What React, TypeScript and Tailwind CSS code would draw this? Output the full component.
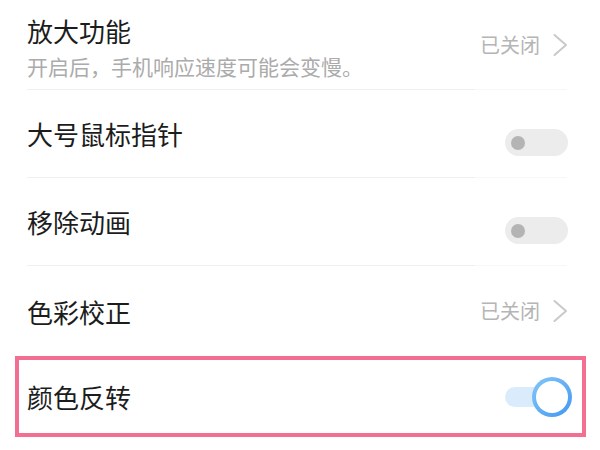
import React from 'react';

const font = { fontFamily: '"Noto Sans CJK SC", "Noto Sans", sans-serif' };

function Chevron() {
  return (
    <svg width="16" height="24" viewBox="0 0 16 24" fill="none">
      <path d="M2.5 2 L14 12 L2.5 22" stroke="#c9c9c9" strokeWidth="2" strokeLinecap="round" strokeLinejoin="round" />
    </svg>
  );
}

function StatusOff() {
  return (
    <div className="flex items-center gap-[12px] pr-[32px]">
      <span className="text-[20px] leading-[26px] text-[#b5b5b5]">已关闭</span>
      <Chevron />
    </div>
  );
}

function SwitchOff() {
  return (
    <div className="mr-[32px] mt-[18px] flex h-[27px] w-[63px] items-center rounded-full bg-[#ececec] pl-[6px]">
      <div className="h-[14px] w-[14px] rounded-full bg-[#b4b4b4]" />
    </div>
  );
}

function SwitchOn() {
  return (
    <div className="relative mr-[10px] h-[40px] w-[67px]">
      <div className="absolute left-0 top-[10px] h-[20px] w-[56px] rounded-full bg-[#daecfc]" />
      <div className="absolute right-0 top-0 h-[40px] w-[40px] rounded-full bg-gradient-to-br from-[#86c6fa] to-[#3f98f0] p-[4px]">
        <div className="h-full w-full rounded-full bg-white" />
      </div>
    </div>
  );
}

function Divider() {
  return (
    <div className="flex h-[1px] pl-[27px]">
      <div className="h-full w-[448px] bg-[#efefef]" />
      <div className="h-full w-[92px] bg-[#f7f7f7]" />
    </div>
  );
}

export default function App() {
  return (
    <div className="h-[450px] w-[600px] overflow-hidden bg-white text-[#1c1c1c]" style={font}>
      {/* 放大功能 */}
      <div className="flex h-[89px] justify-between">
        <div className="flex flex-col pl-[27px] pt-[15px]">
          <span className="text-[26px] leading-[31px]">放大功能</span>
          <span className="mt-[7px] text-[21px] leading-[27px] text-[#ababab]">开启后，手机响应速度可能会变慢。</span>
        </div>
        <div className="flex items-center">
          <StatusOff />
        </div>
      </div>
      <Divider />

      <div className="flex h-[87px] items-center justify-between pl-[27px]">
        <span className="text-[26px] leading-[31px]">大号鼠标指针</span>
        <SwitchOff />
      </div>
      <Divider />

      <div className="flex h-[87px] items-center justify-between pl-[27px]">
        <span className="text-[26px] leading-[31px]">移除动画</span>
        <SwitchOff />
      </div>
      <Divider />

      <div className="flex h-[90px] items-center justify-between pl-[27px]">
        <span className="text-[26px] leading-[31px]">色彩校正</span>
        <StatusOff />
      </div>

      <div className="ml-[15px] flex h-[81px] w-[571px] items-center justify-between border-[4px] border-[#f26f91] pl-[8px]">
        <span className="text-[26px] leading-[31px]">颜色反转</span>
        <SwitchOn />
      </div>
    </div>
  );
}
